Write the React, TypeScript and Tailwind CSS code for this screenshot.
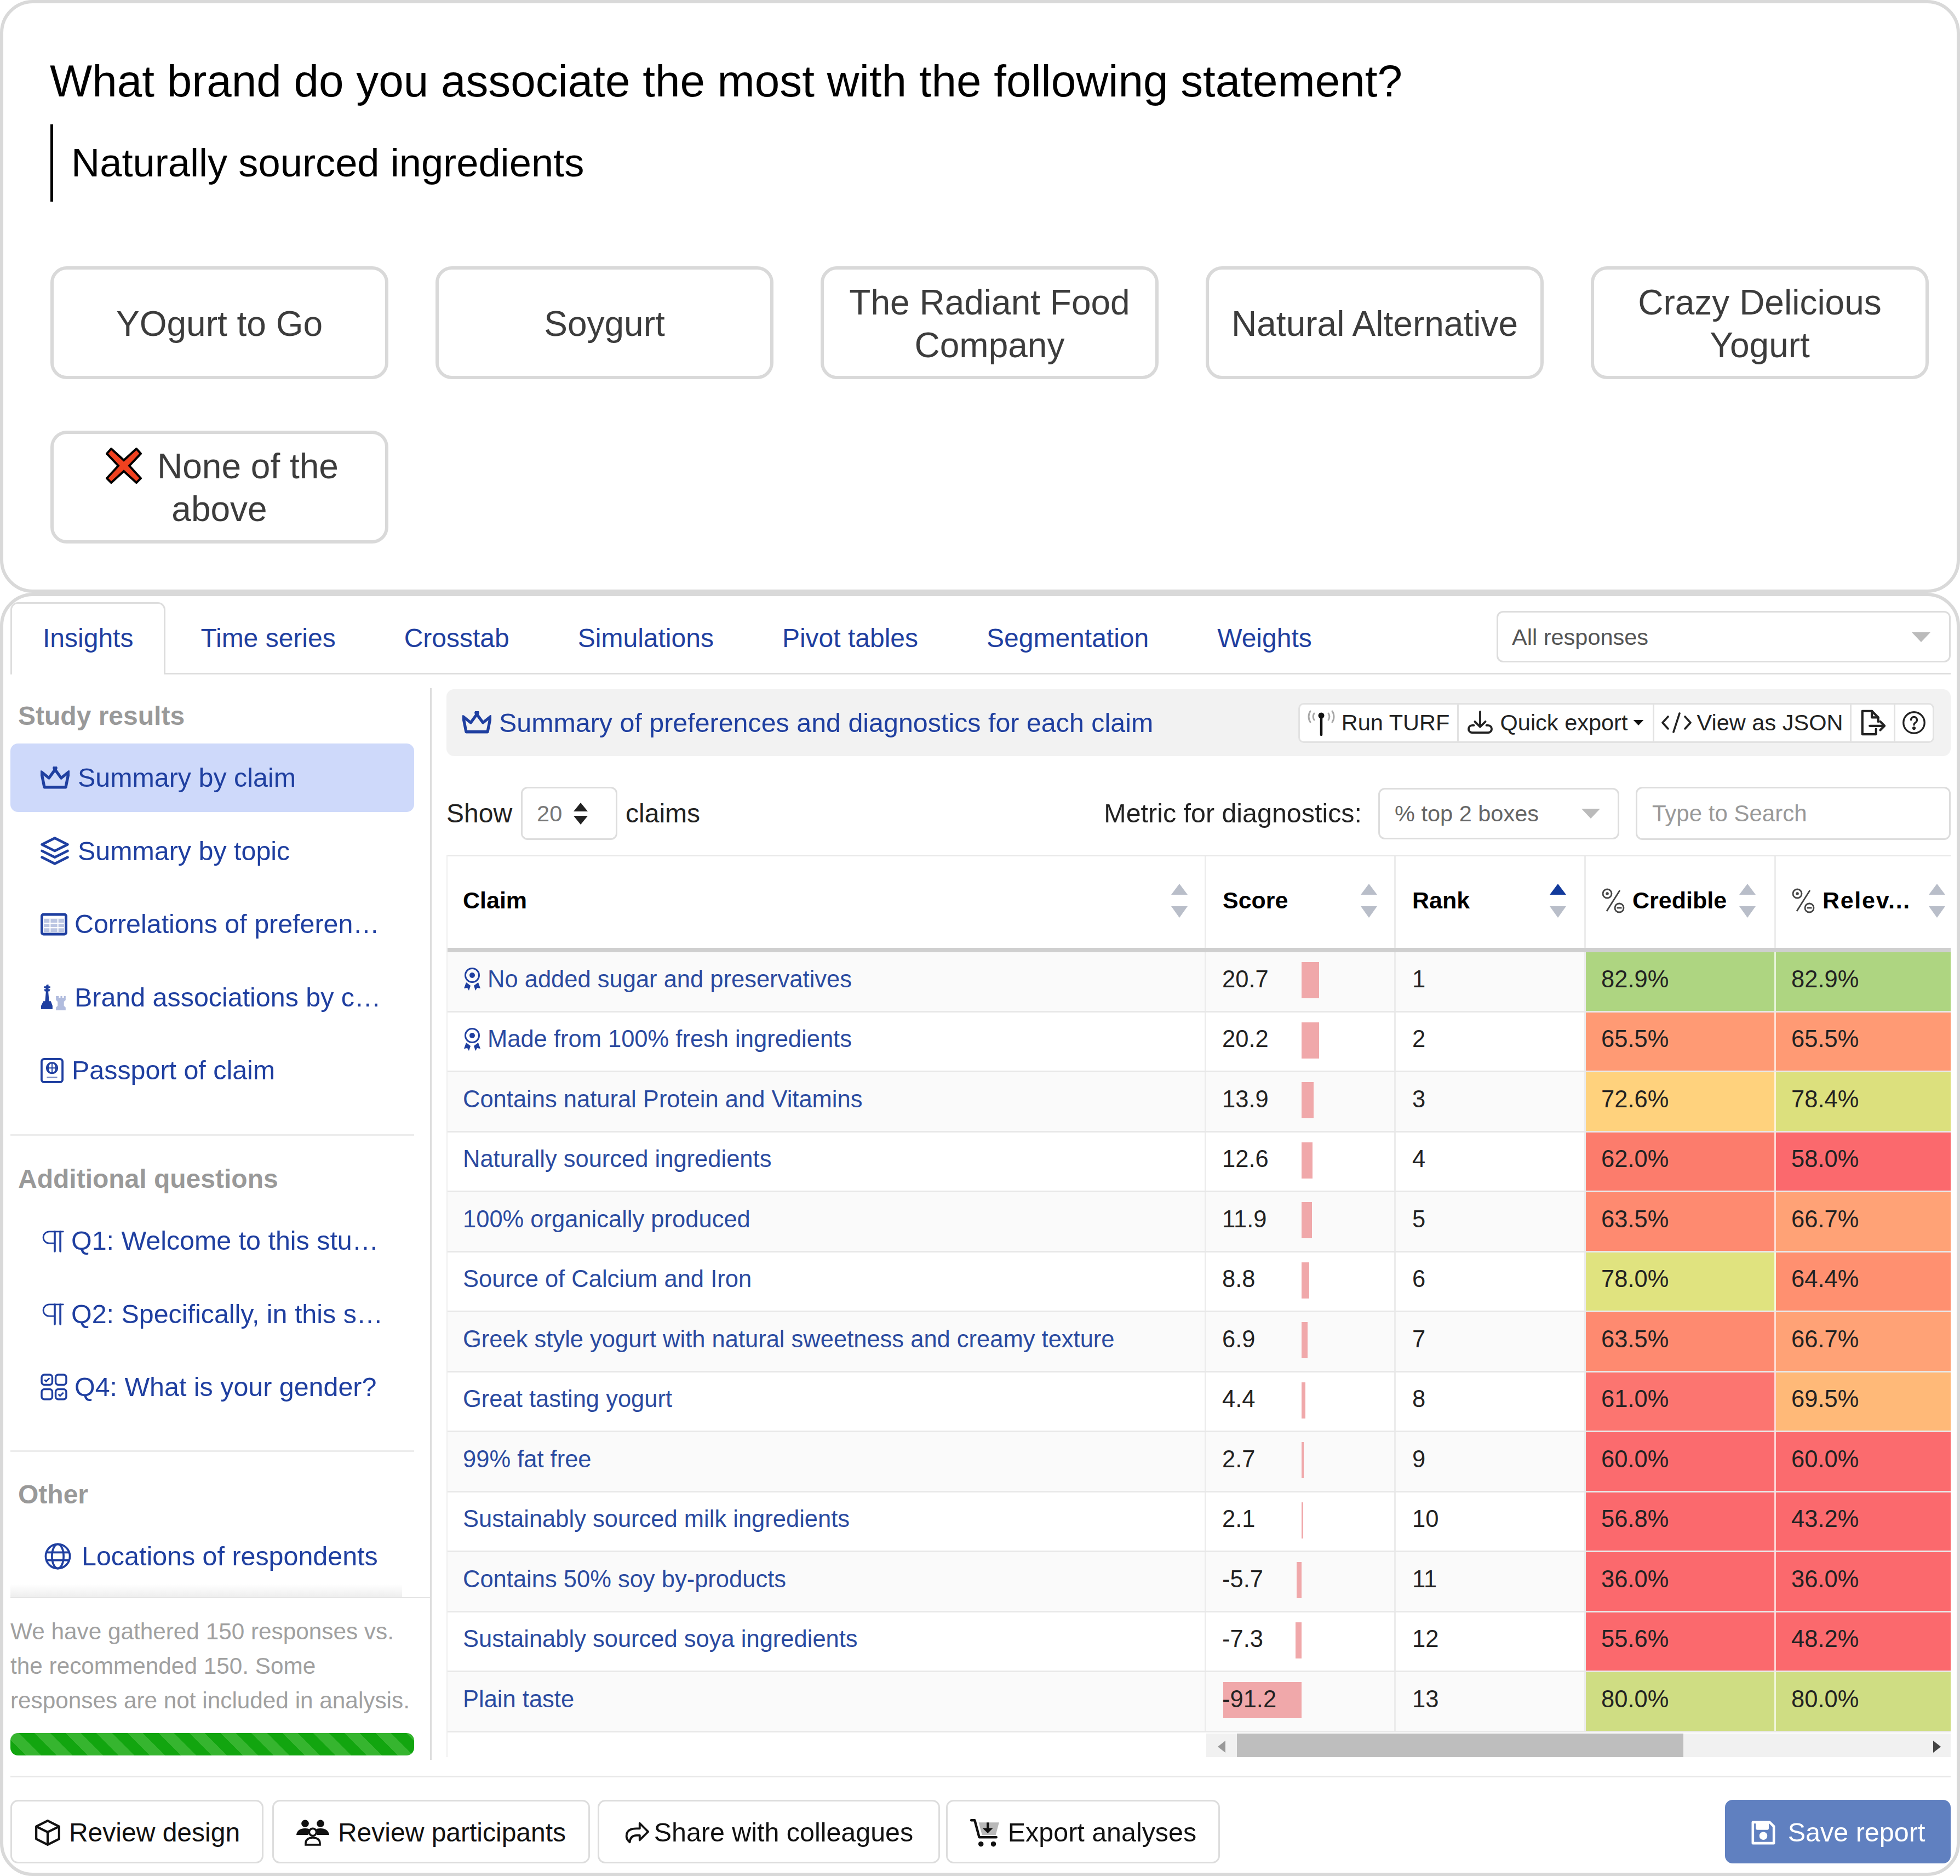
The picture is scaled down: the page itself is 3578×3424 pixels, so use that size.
import React from "react";

type Ic = { className?: string };
const Crown = ({ className }: Ic) => (
  <svg viewBox="2.5 4.5 19 15" className={className} fill="none" stroke="currentColor" strokeWidth={1.9} strokeLinecap="round" strokeLinejoin="round">
    <path d="M12 6.500l4 5.500l5 -4l-2 10h-14l-2 -10l5 4z" />
    <circle cx="12" cy="5.500" r=".6" fill="currentColor" />
  </svg>
);
const Layers = ({ className }: Ic) => (
  <svg viewBox="2 2 20 20" className={className} fill="none" stroke="currentColor" strokeWidth={1.8} strokeLinecap="round" strokeLinejoin="round">
    <path d="M12 3l9 4.500l-9 4.500l-9 -4.500z" />
    <path d="M3 12l9 4.500l9 -4.500" />
    <path d="M3 16.500l9 4.500l9 -4.500" />
  </svg>
);
const GridIc = ({ className }: Ic) => (
  <svg viewBox="0 0 24 20" className={className} fill="none">
    <rect x="1.200" y="1.200" width="21.600" height="17.600" rx="1.500" stroke="currentColor" strokeWidth="2.400" />
    <rect x="3" y="5" width="18" height="12" fill="currentColor" opacity=".3" />
    <path d="M3 9h18M3 13h18M8.500 5v12M15.500 5v12" stroke="#fff" strokeWidth="1" />
  </svg>
);
const Chess = ({ className }: Ic) => (
  <svg viewBox="0 0 48 48" className={className} fill="currentColor">
    <path d="M11 2h3v3h3v3h-3v2h3l-1.500 4h-2l1.500 17h3l3 8v6H1v-6l4-8h3l1.500-17h-2L6 10h3V8H6V5h3z" />
    <path opacity=".35" d="M29 22h3v3h3v-3h3v3h3v-3h3v7l-3 3v7l3 3v5H27v-5l3-3v-7l-3-3v-7z" />
  </svg>
);
const Passport = ({ className }: Ic) => (
  <svg viewBox="0 0 22 24" className={className} fill="none" stroke="currentColor" strokeWidth="1.600">
    <rect x="1" y="1" width="20" height="22" rx="2.400" strokeWidth="2" />
    <circle cx="11" cy="9.500" r="5" />
    <path d="M6 9.500h10M11 4.500v10M8.500 5.500c-1.500 2.600-1.500 5.400 0 8M13.500 5.500c1.500 2.600 1.500 5.400 0 8" strokeWidth="1" />
    <path d="M6 18.500h10" strokeWidth="1.400" opacity=".6" />
  </svg>
);
const Pilcrow = ({ className }: Ic) => (
  <svg viewBox="0 0 24 24" className={className} fill="none" stroke="currentColor" strokeWidth="1.600" strokeLinecap="round">
    <path d="M23 2H8a6.200 6.200 0 0 0 0 12.400h5" />
    <path d="M14 2v21" strokeWidth="2.200" />
    <path d="M20 2v21" strokeWidth="2.200" />
  </svg>
);
const ChoiceIc = ({ className }: Ic) => (
  <svg viewBox="0 0 24 24" className={className} fill="none" stroke="currentColor" strokeWidth="1.700">
    <rect x="1" y="1" width="9.500" height="9" rx="2.400" />
    <rect x="13.500" y="1" width="9.500" height="9" rx="2.400" />
    <rect x="1" y="14" width="9.500" height="9" rx="2.400" />
    <rect x="13.500" y="14" width="9.500" height="9" rx="2.400" />
    <path d="M3.500 5.500l1.500 1.500l3-3M16 18.500l1.500 1.500l3-3" strokeWidth="1.400" />
  </svg>
);
const Globe = ({ className }: Ic) => (
  <svg viewBox="0 0 24 24" className={className} fill="none" stroke="currentColor" strokeWidth="1.800">
    <circle cx="12" cy="12" r="10.800" />
    <path d="M1.500 8.500h21M1.500 15.500h21" />
    <ellipse cx="12" cy="12" rx="5.200" ry="10.800" />
  </svg>
);
const Box = ({ className }: Ic) => (
  <svg viewBox="0 0 24 24" className={className} fill="none" stroke="currentColor" strokeWidth="2" strokeLinejoin="round">
    <path d="M12 1.500l10 5v11l-10 5l-10 -5v-11z" />
    <path d="M2 6.500l10 5l10 -5M12 11.500v11" />
  </svg>
);
const Users = ({ className }: Ic) => (
  <svg viewBox="0 0 30 24" className={className} fill="currentColor">
    <circle cx="8" cy="3.600" r="3.400" />
    <circle cx="22" cy="3.600" r="3.400" />
    <path d="M0 14c.5-4 3.500-6 8-6c2 0 3.500.4 4.600 1.300a6 6 0 0 0-1.600 4.700z" />
    <path d="M30 14c-.5-4-3.500-6-8-6c-2 0-3.500.4-4.600 1.300a6 6 0 0 1 1.600 4.700z" />
    <circle cx="15" cy="11.500" r="3.300" fill="none" stroke="currentColor" strokeWidth="1.800" />
    <path d="M8.500 23v-1.500c0-3 2.500-5 6.500-5s6.500 2 6.500 5v1.500z" fill="none" stroke="currentColor" strokeWidth="1.800" />
  </svg>
);
const Share = ({ className }: Ic) => (
  <svg viewBox="0 0 24 22" className={className} fill="none" stroke="currentColor" strokeWidth="2" strokeLinejoin="round" strokeLinecap="round">
    <path d="M14.500 2l8 8l-8 8v-4.500h-3c-3.500 0-6 1.500-6.500 6.500c-2.500-2-3.500-4-3-7c.5-4 4-6 9.500-6h3z" />
  </svg>
);
const Cart = ({ className }: Ic) => (
  <svg viewBox="0 0 28 26" className={className} fill="none">
    <path d="M8 4h18l-3 11H11z" fill="#b9b9b9" />
    <path d="M1.500 2h3l4 15h15" stroke="#111" strokeWidth="2.200" strokeLinecap="round" strokeLinejoin="round" />
    <circle cx="10" cy="23" r="2.300" fill="#111" />
    <circle cx="21" cy="23" r="2.300" fill="#111" />
    <path d="M16 4v7" stroke="#111" strokeWidth="2" />
    <path d="M11.500 9h9l-4.500 4.500z" fill="#111" />
  </svg>
);
const Antenna = ({ className }: Ic) => (
  <svg viewBox="0 0 50 50" className={className} fill="none">
    <path d="M5 4c-4 6-4 14 0 20M12 8c-2.500 4-2.500 8 0 12M45 4c4 6 4 14 0 20M38 8c2.500 4 2.500 8 0 12" stroke="#a8a8a8" strokeWidth="3" strokeLinecap="round" />
    <circle cx="25" cy="12" r="5.500" fill="#111" />
    <path d="M25 14v33" stroke="#111" strokeWidth="4.500" strokeLinecap="round" />
  </svg>
);
const Download = ({ className }: Ic) => (
  <svg viewBox="0 0 24 24" className={className} fill="none" stroke="currentColor" strokeWidth="2" strokeLinecap="round" strokeLinejoin="round">
    <path d="M12 1.500v14M7 11l5 5l5 -5" />
    <path d="M6 14.500H4.500a3.400 3.400 0 0 0 0 7h15a3.400 3.400 0 0 0 0 -7H18" />
  </svg>
);
const FileOut = ({ className }: Ic) => (
  <svg viewBox="0 0 26 26" className={className} fill="none" stroke="currentColor" strokeWidth="2.200" strokeLinecap="round" strokeLinejoin="round">
    <path d="M16 19v5H3V2h9l6 6v4" />
    <path d="M12 2v6h6" />
    <path d="M10 16h14M20 12l4 4l-4 4" />
  </svg>
);
const Help = ({ className }: Ic) => (
  <svg viewBox="0 0 24 24" className={className} fill="none" stroke="currentColor" strokeWidth="1.800" strokeLinecap="round">
    <circle cx="12" cy="12" r="10.500" />
    <path d="M9 9.200a3 3 0 1 1 4.600 2.600c-1 .6-1.600 1.200-1.600 2.400" />
    <circle cx="12" cy="17.500" r=".8" fill="currentColor" />
  </svg>
);
const Code = ({ className }: Ic) => (
  <svg viewBox="0 0 55 40" className={className} fill="none" stroke="currentColor" strokeWidth="3.600" strokeLinecap="round" strokeLinejoin="round">
    <path d="M12 9L2 20l10 11M43 9l10 11l-10 11M33 3L22 37" />
  </svg>
);
const Save = ({ className }: Ic) => (
  <svg viewBox="0 0 24 24" className={className} fill="none" stroke="currentColor" strokeWidth="2.400" strokeLinejoin="round">
    <path d="M2 2h16l4 4v16H2z" />
    <path d="M6 2.500h10v5.500H6z" fill="currentColor" />
    <circle cx="12" cy="15" r="2.600" fill="currentColor" />
  </svg>
);
const Medal = ({ className }: Ic) => (
  <svg viewBox="0 0 34 44" className={className} fill="none">
    <circle cx="17" cy="15" r="12.500" stroke="currentColor" strokeWidth="3" />
    <circle cx="17" cy="15" r="5" fill="currentColor" />
    <path d="M6 28l-4 11l6-1l3 5l3-9zM28 28l4 11l-6-1l-3 5l-3-9z" fill="currentColor" />
  </svg>
);
const PercentIc = ({ className }: Ic) => (
  <svg viewBox="0 0 44 50" className={className} fill="none" stroke="#444" strokeWidth="2.800">
    <path d="M34 6L10 44" />
    <circle cx="11" cy="12" r="8" />
    <circle cx="11" cy="12" r="2.800" fill="#444" stroke="none" />
    <circle cx="33" cy="38" r="8" />
    <path d="M28.500 38h9" />
  </svg>
);
const RedX = ({ className }: Ic) => (
  <svg viewBox="0 0 66 66" className={className}>
    <path d="M10 2L33 23L56 2L64 11L43 33L64 56L56 64L33 43L10 64L2 56L23 33L2 11Z" fill="#f0411f" stroke="#000" strokeWidth="4" strokeLinejoin="miter" />
  </svg>
);
const Caret = ({ className }: Ic) => (
  <svg viewBox="0 0 34 18" className={className} fill="currentColor">
    <path d="M0 0h34L17 18z" />
  </svg>
);
const Sort = ({ active }: { active?: boolean }) => (
  <svg viewBox="0 0 30 62" className="w-[30px] h-[62px] shrink-0">
    <path d="M15 0L30 20H0z" fill={active ? "#123a9c" : "#b9bec9"} />
    <path d="M15 62L30 41H0z" fill="#b9bec9" />
  </svg>
);

const options = ["YOgurt to Go", "Soygurt", "The Radiant Food Company", "Natural Alternative", "Crazy Delicious Yogurt"];

const tabs = ["Time series", "Crosstab", "Simulations", "Pivot tables", "Segmentation", "Weights"];

type Row = { c: string; m?: boolean; s: string; n: number; a: string; ac: string; b: string; bc: string };
const R = "#fb696d";
const rows: Row[] = [
  { c: "No added sugar and preservatives", m: true, s: "20.7", n: 20.7, a: "82.9%", ac: "#aed581", b: "82.9%", bc: "#aed581" },
  { c: "Made from 100% fresh ingredients", m: true, s: "20.2", n: 20.2, a: "65.5%", ac: "#ff9a74", b: "65.5%", bc: "#ff9a74" },
  { c: "Contains natural Protein and Vitamins", s: "13.9", n: 13.9, a: "72.6%", ac: "#ffd27d", b: "78.4%", bc: "#dce07d" },
  { c: "Naturally sourced ingredients", s: "12.6", n: 12.6, a: "62.0%", ac: "#fc7c6c", b: "58.0%", bc: R },
  { c: "100% organically produced", s: "11.9", n: 11.9, a: "63.5%", ac: "#fe8a70", b: "66.7%", bc: "#ffa276" },
  { c: "Source of Calcium and Iron", s: "8.8", n: 8.8, a: "78.0%", ac: "#e0e37f", b: "64.4%", bc: "#ff9070" },
  { c: "Greek style yogurt with natural sweetness and creamy texture", s: "6.9", n: 6.9, a: "63.5%", ac: "#fe8a70", b: "66.7%", bc: "#ffa276" },
  { c: "Great tasting yogurt", s: "4.4", n: 4.4, a: "61.0%", ac: "#fc7570", b: "69.5%", bc: "#ffb978" },
  { c: "99% fat free", s: "2.7", n: 2.7, a: "60.0%", ac: "#fb6b6e", b: "60.0%", bc: "#fb6b6e" },
  { c: "Sustainably sourced milk ingredients", s: "2.1", n: 2.1, a: "56.8%", ac: R, b: "43.2%", bc: R },
  { c: "Contains 50% soy by-products", s: "-5.7", n: -5.7, a: "36.0%", ac: R, b: "36.0%", bc: R },
  { c: "Sustainably sourced soya ingredients", s: "-7.3", n: -7.3, a: "55.6%", ac: R, b: "48.2%", bc: R },
  { c: "Plain taste", s: "-91.2", n: -91.2, a: "80.0%", ac: "#cfdd83", b: "80.0%", bc: "#cfdd83" },
];

function NavItem({ icon, text, active, left }: { icon: React.ReactNode; text: string; active?: boolean; left?: string }) {
  return (
    <div className={`h-[125px] rounded-[14px] flex items-center text-[48.400px] leading-none whitespace-nowrap text-[#1f3fa0] ${active ? "bg-[#ced9fa]" : ""} ${left ?? "pl-[55px]"}`}>
      {icon}
      {text}
    </div>
  );
}

const SideTitle = ({ children }: { children: string }) => (
  <div className="h-[101px] flex items-center pl-[14px] text-[48px] font-bold text-[#999999] leading-none">{children}</div>
);

export default function App() {
  return (
    <div className="w-[3578px] h-[3424px] bg-white overflow-hidden font-['Liberation_Sans',Arial,sans-serif]">
      {/* Question card */}
      <div className="h-[1082px] border-[6px] border-[#d9d9d9] rounded-[60px] pt-[92px] pl-[85px]">
        <div className="h-[100px] flex items-center text-[81.800px] text-black leading-none whitespace-nowrap">
          What brand do you associate the most with the following statement?
        </div>
        <div className="mt-[29px] ml-[1px] h-[141px] border-l-[5px] border-black pl-[33px] flex items-center text-[72.300px] text-black leading-none">
          Naturally sourced ingredients
        </div>
        <div className="mt-[118px] ml-[1px] grid grid-cols-[repeat(5,617px)] auto-rows-[206px] gap-x-[86px] gap-y-[94px]">
          {options.map((o) => (
            <div key={o} className="border-[6px] border-[#d9d9d9] rounded-[30px] px-[30px] flex items-center justify-center text-center text-[64px] leading-[78px] text-[#3c3c3c]">
              <span className="relative top-[2px]">{o}</span>
            </div>
          ))}
          <div className="border-[6px] border-[#d9d9d9] rounded-[30px] px-[30px] flex items-center justify-center text-center text-[64px] leading-[78px] text-[#3c3c3c]">
            <div className="relative top-[1px]">
              <RedX className="inline-block w-[66px] h-[66px] align-[-10px] mr-[28px] relative left-[5px]" />
              <span className="relative left-[5px]">None of the</span> above
            </div>
          </div>
        </div>
      </div>

      {/* Analysis card */}
      <div className="h-[2342px] border-[6px] border-[#d9d9d9] rounded-[60px]">
        {/* Tabs */}
        <div className="h-[143px] pt-[11px] ml-[13px] mr-[11px] border-b-[3px] border-[#dddddd] flex items-start">
          <div className="h-[132px] bg-white border-l-[3px] border-r-[3px] border-t-[3px] border-[#dddddd] rounded-t-[14px] px-[56px] flex items-center pb-[4px] text-[48px] text-[#1f3fa0] leading-none">
            Insights
          </div>
          {tabs.map((t, i) => (
            <div key={t} className={`h-[129px] px-[56px] flex items-center pt-[2px] text-[48px] text-[#1f3fa0] leading-none whitespace-nowrap ${i === 0 ? "ml-[8px]" : "ml-[13px]"}`}>
              {t}
            </div>
          ))}
          <div className="ml-auto mt-[16px] w-[829px] h-[94px] border-[3px] border-[#dddddd] rounded-[12px] flex items-center pl-[25px] pr-[34px] pt-[2px] text-[41.500px] text-[#555555] leading-none">
            All responses
            <Caret className="ml-auto w-[34px] h-[18px] text-[#bbbbbb]" />
          </div>
        </div>

        {/* Body */}
        <div className="mt-[25px] flex">
          {/* Sidebar */}
          <div className="w-[782px] pl-[13px] pr-[29px] border-r-[3px] border-[#dddddd] h-[1956px] shrink-0">
            <SideTitle>Study results</SideTitle>
            <div className="flex flex-col gap-[8.500px]">
              <NavItem active text="Summary by claim" icon={<Crown className="w-[53px] h-[42px] mr-[15px]" />} />
              <NavItem text="Summary by topic" icon={<Layers className="w-[52px] h-[52px] mr-[16px]" />} />
              <NavItem text="Correlations of preferen…" icon={<GridIc className="w-[49px] h-[42px] mr-[13px]" />} />
              <NavItem text="Brand associations by c…" icon={<Chess className="w-[50px] h-[50px] mr-[12px]" />} />
              <NavItem text="Passport of claim" icon={<Passport className="w-[42px] h-[48px] mr-[15px]" />} />
            </div>
            <div className="mt-[54px] h-[3px] bg-[#ececec]" />
            <div className="mt-[28px]">
              <SideTitle>Additional questions</SideTitle>
            </div>
            <div className="flex flex-col gap-[8.500px]">
              <NavItem text="Q1: Welcome to this stu…" left="pl-[57px]" icon={<Pilcrow className="w-[41px] h-[44px] mr-[13px]" />} />
              <NavItem text="Q2: Specifically, in this s…" left="pl-[57px]" icon={<Pilcrow className="w-[41px] h-[44px] mr-[13px]" />} />
              <NavItem text="Q4: What is your gender?" icon={<ChoiceIc className="w-[49px] h-[49px] mr-[13px]" />} />
            </div>
            <div className="mt-[53px] h-[3px] bg-[#ececec]" />
            <div className="mt-[27px]">
              <SideTitle>Other</SideTitle>
            </div>
            <NavItem text="Locations of respondents" left="pl-[62px]" icon={<Globe className="w-[49px] h-[49px] mr-[19px]" />} />
            <div className="mt-[-12px] mr-[-29px] h-[26px] border-b-[2px] border-[#e4e4e4]">
              <div className="w-[715px] h-full bg-gradient-to-b from-white to-[#eeeeee]" />
            </div>
            <div className="mt-[29px] text-[42.300px] leading-[63px] text-[#a0a0a0] whitespace-nowrap">
              We have gathered 150 responses vs.
              <br />
              the recommended 150. Some
              <br />
              responses are not included in analysis.
            </div>
            <div className="mt-[28px] h-[41px] rounded-[14px] bg-[repeating-linear-gradient(45deg,#12a50f_0,#12a50f_20px,#36b52f_20px,#36b52f_40px)]" />
          </div>

          {/* Main */}
          <div className="ml-[27px] pt-[2px] w-[2746px] shrink-0">
            <div className="h-[122px] bg-[#f2f2f2] rounded-[14px] flex items-center pl-[29px] pr-[30px] text-[#1f3fa0]">
              <Crown className="w-[53px] h-[42px] mr-[14px]" />
              <span className="text-[48.400px] leading-none">Summary of preferences and diagnostics for each claim</span>
              <div className="ml-auto h-[73px] bg-white border-[3px] border-[#e2e2e2] rounded-[10px] flex text-[41.500px] text-[#222222] leading-none">
                <div className="w-[290px] flex items-center justify-center gap-[12px] border-r-[3px] border-[#e2e2e2]">
                  <Antenna className="w-[50px] h-[50px]" />
                  Run TURF
                </div>
                <div className="w-[357px] flex items-center justify-center gap-[14px] border-r-[3px] border-[#e2e2e2]">
                  <Download className="w-[46px] h-[46px]" />
                  <span>Quick export</span>
                  <Caret className="w-[20px] h-[10px] text-[#111111] -ml-[4px]" />
                </div>
                <div className="w-[360px] flex items-center justify-center gap-[10px] border-r-[3px] border-[#e2e2e2]">
                  <Code className="w-[55px] h-[40px]" />
                  View as JSON
                </div>
                <div className="w-[80px] flex items-center justify-center border-r-[3px] border-[#e2e2e2]">
                  <FileOut className="w-[50px] h-[50px]" />
                </div>
                <div className="w-[68px] flex items-center justify-center">
                  <Help className="w-[44px] h-[44px]" />
                </div>
              </div>
            </div>

            {/* Controls */}
            <div className="mt-[56px] h-[97px] flex items-center text-[48px] text-[#222222] leading-none">
              <span>Show</span>
              <div className="ml-[16px] mr-[15px] w-[176px] h-[97px] border-[3px] border-[#dddddd] rounded-[12px] flex items-center pl-[26px] text-[41.500px] text-[#777777]">
                20
                <svg viewBox="0 0 28 40" className="ml-[20px] w-[28px] h-[40px] text-[#222222]" fill="currentColor">
                  <path d="M14 0L27 16H1zM14 40L1 24H27z" />
                </svg>
              </div>
              <span>claims</span>
              <span className="ml-auto text-[48.400px]">Metric for diagnostics:</span>
              <div className="ml-[30px] w-[440px] h-[94px] border-[3px] border-[#dddddd] rounded-[12px] flex items-center pl-[27px] pr-[32px] text-[41.500px] text-[#666666]">
                % top 2 boxes
                <Caret className="ml-auto w-[34px] h-[18px] text-[#bbbbbb]" />
              </div>
              <div className="ml-[30px] w-[575px] h-[97px] border-[3px] border-[#dddddd] rounded-[12px] flex items-center pl-[27px] text-[42px] text-[#999999]">
                Type to Search
              </div>
            </div>

            {/* Table */}
            <div className="mt-[28px] border-l-[2px] border-[#eeeeee] text-[43.500px] leading-none text-[#222222]">
              <div className="h-[177px] flex border-t-[2px] border-b-[8px] border-[#e8e8e8] border-b-[#cfcfcf] font-bold text-[43px] text-black">
                <div className="w-[1385px] pl-[28px] pr-[31px] pb-[6px] flex items-center justify-between border-r-[3px] border-[#ececec]">
                  Claim
                  <Sort />
                </div>
                <div className="w-[346px] pl-[30px] pr-[31px] pb-[6px] flex items-center justify-between border-r-[3px] border-[#ececec]">
                  Score
                  <Sort />
                </div>
                <div className="w-[347px] pl-[30px] pr-[33px] pb-[6px] flex items-center justify-between border-r-[3px] border-[#ececec]">
                  Rank
                  <Sort active />
                </div>
                <div className="w-[347px] pl-[28px] pr-[34px] pb-[6px] flex items-center justify-between border-r-[3px] border-[#ececec]">
                  <span className="flex items-center gap-[13px]">
                    <PercentIc className="w-[44px] h-[50px]" />
                    Credible
                  </span>
                  <Sort />
                </div>
                <div className="w-[319px] pl-[28px] pr-[10px] pb-[6px] flex items-center justify-between">
                  <span className="flex items-center gap-[13px]">
                    <PercentIc className="w-[44px] h-[50px]" />
                    <span className="tracking-[1.700px]">Relev...</span>
                  </span>
                  <Sort />
                </div>
              </div>
              {rows.map((r, i) => {
                const w = Math.abs(r.n) * 1.57;
                return (
                  <div key={r.c} className={`h-[109.500px] flex border-b-[3px] border-[#e8e8e8] ${i % 2 === 0 ? "bg-[#fafafa]" : "bg-white"}`}>
                    <div className="w-[1385px] pl-[28px] pb-[8px] flex items-center border-r-[3px] border-[#ececec] text-[#2a4aa0] whitespace-nowrap">
                      {r.m && <Medal className="w-[34px] h-[44px] mr-[11px] text-[#1f3fa0]" />}
                      {r.c}
                    </div>
                    <div className="relative w-[346px] pl-[29px] pb-[8px] flex items-center border-r-[3px] border-[#ececec]">
                      <div
                        className="absolute top-[18px] h-[66px] bg-[#f0a8aa]"
                        style={r.n >= 0 ? { left: 174, width: w } : { left: 174 - w, width: w }}
                      />
                      <span className="relative">{r.s}</span>
                    </div>
                    <div className="w-[347px] pl-[30px] pb-[8px] flex items-center border-r-[3px] border-[#ececec]">{i + 1}</div>
                    <div className="w-[347px] pl-[28px] pb-[8px] flex items-center border-r-[3px] border-white/70" style={{ background: r.ac }}>
                      {r.a}
                    </div>
                    <div className="w-[319px] pl-[28px] pb-[8px] flex items-center" style={{ background: r.bc }}>
                      {r.b}
                    </div>
                  </div>
                );
              })}
              {/* Scrollbar */}
              <div className="mt-[2px] ml-[1385px] h-[43px] bg-[#f1f1f1] flex items-center">
                <div className="w-[56px] flex justify-center pt-[6px]">
                  <svg viewBox="0 0 14 22" className="w-[14px] h-[22px] text-[#999999]" fill="currentColor"><path d="M14 0v22L0 11z" /></svg>
                </div>
                <div className="w-[815px] h-full bg-[#bebebe]" />
                <div className="ml-auto w-[50px] flex justify-center pt-[6px]">
                  <svg viewBox="0 0 14 22" className="w-[14px] h-[22px] text-[#444444]" fill="currentColor"><path d="M0 0v22L14 11z" /></svg>
                </div>
              </div>
            </div>
          </div>
        </div>

        {/* Footer */}
        <div className="mt-[29px] ml-[13px] mr-[11px] h-[3px] bg-[#e8e8e8]" />
        <div className="mt-[41px] ml-[13px] mr-[11px] h-[116px] flex text-[48px] leading-none text-[#111111]">
          <div className="w-[462px] border-[3px] border-[#dddddd] rounded-[14px] flex items-center justify-center gap-[14px] pt-[3px]">
            <Box className="w-[50px] h-[50px]" />
            Review design
          </div>
          <div className="ml-[16px] w-[580px] border-[3px] border-[#dddddd] rounded-[14px] flex items-center justify-center gap-[16px] pt-[3px]">
            <Users className="w-[60px] h-[48px]" />
            Review participants
          </div>
          <div className="ml-[14px] w-[625px] border-[3px] border-[#dddddd] rounded-[14px] flex items-center justify-center gap-[8px] pt-[3px] text-[48.400px]">
            <Share className="w-[46px] h-[44px]" />
            Share with colleagues
          </div>
          <div className="ml-[11px] w-[500px] border-[3px] border-[#dddddd] rounded-[14px] flex items-center justify-center gap-[12px] pt-[3px] text-[48.400px]">
            <Cart className="w-[58px] h-[54px]" />
            Export analyses
          </div>
          <div className="ml-auto w-[412px] bg-[#6080c0] rounded-[14px] text-white flex items-center justify-center gap-[22px] pt-[3px] text-[48.500px]">
            <Save className="w-[46px] h-[46px]" />
            Save report
          </div>
        </div>
      </div>
    </div>
  );
}
